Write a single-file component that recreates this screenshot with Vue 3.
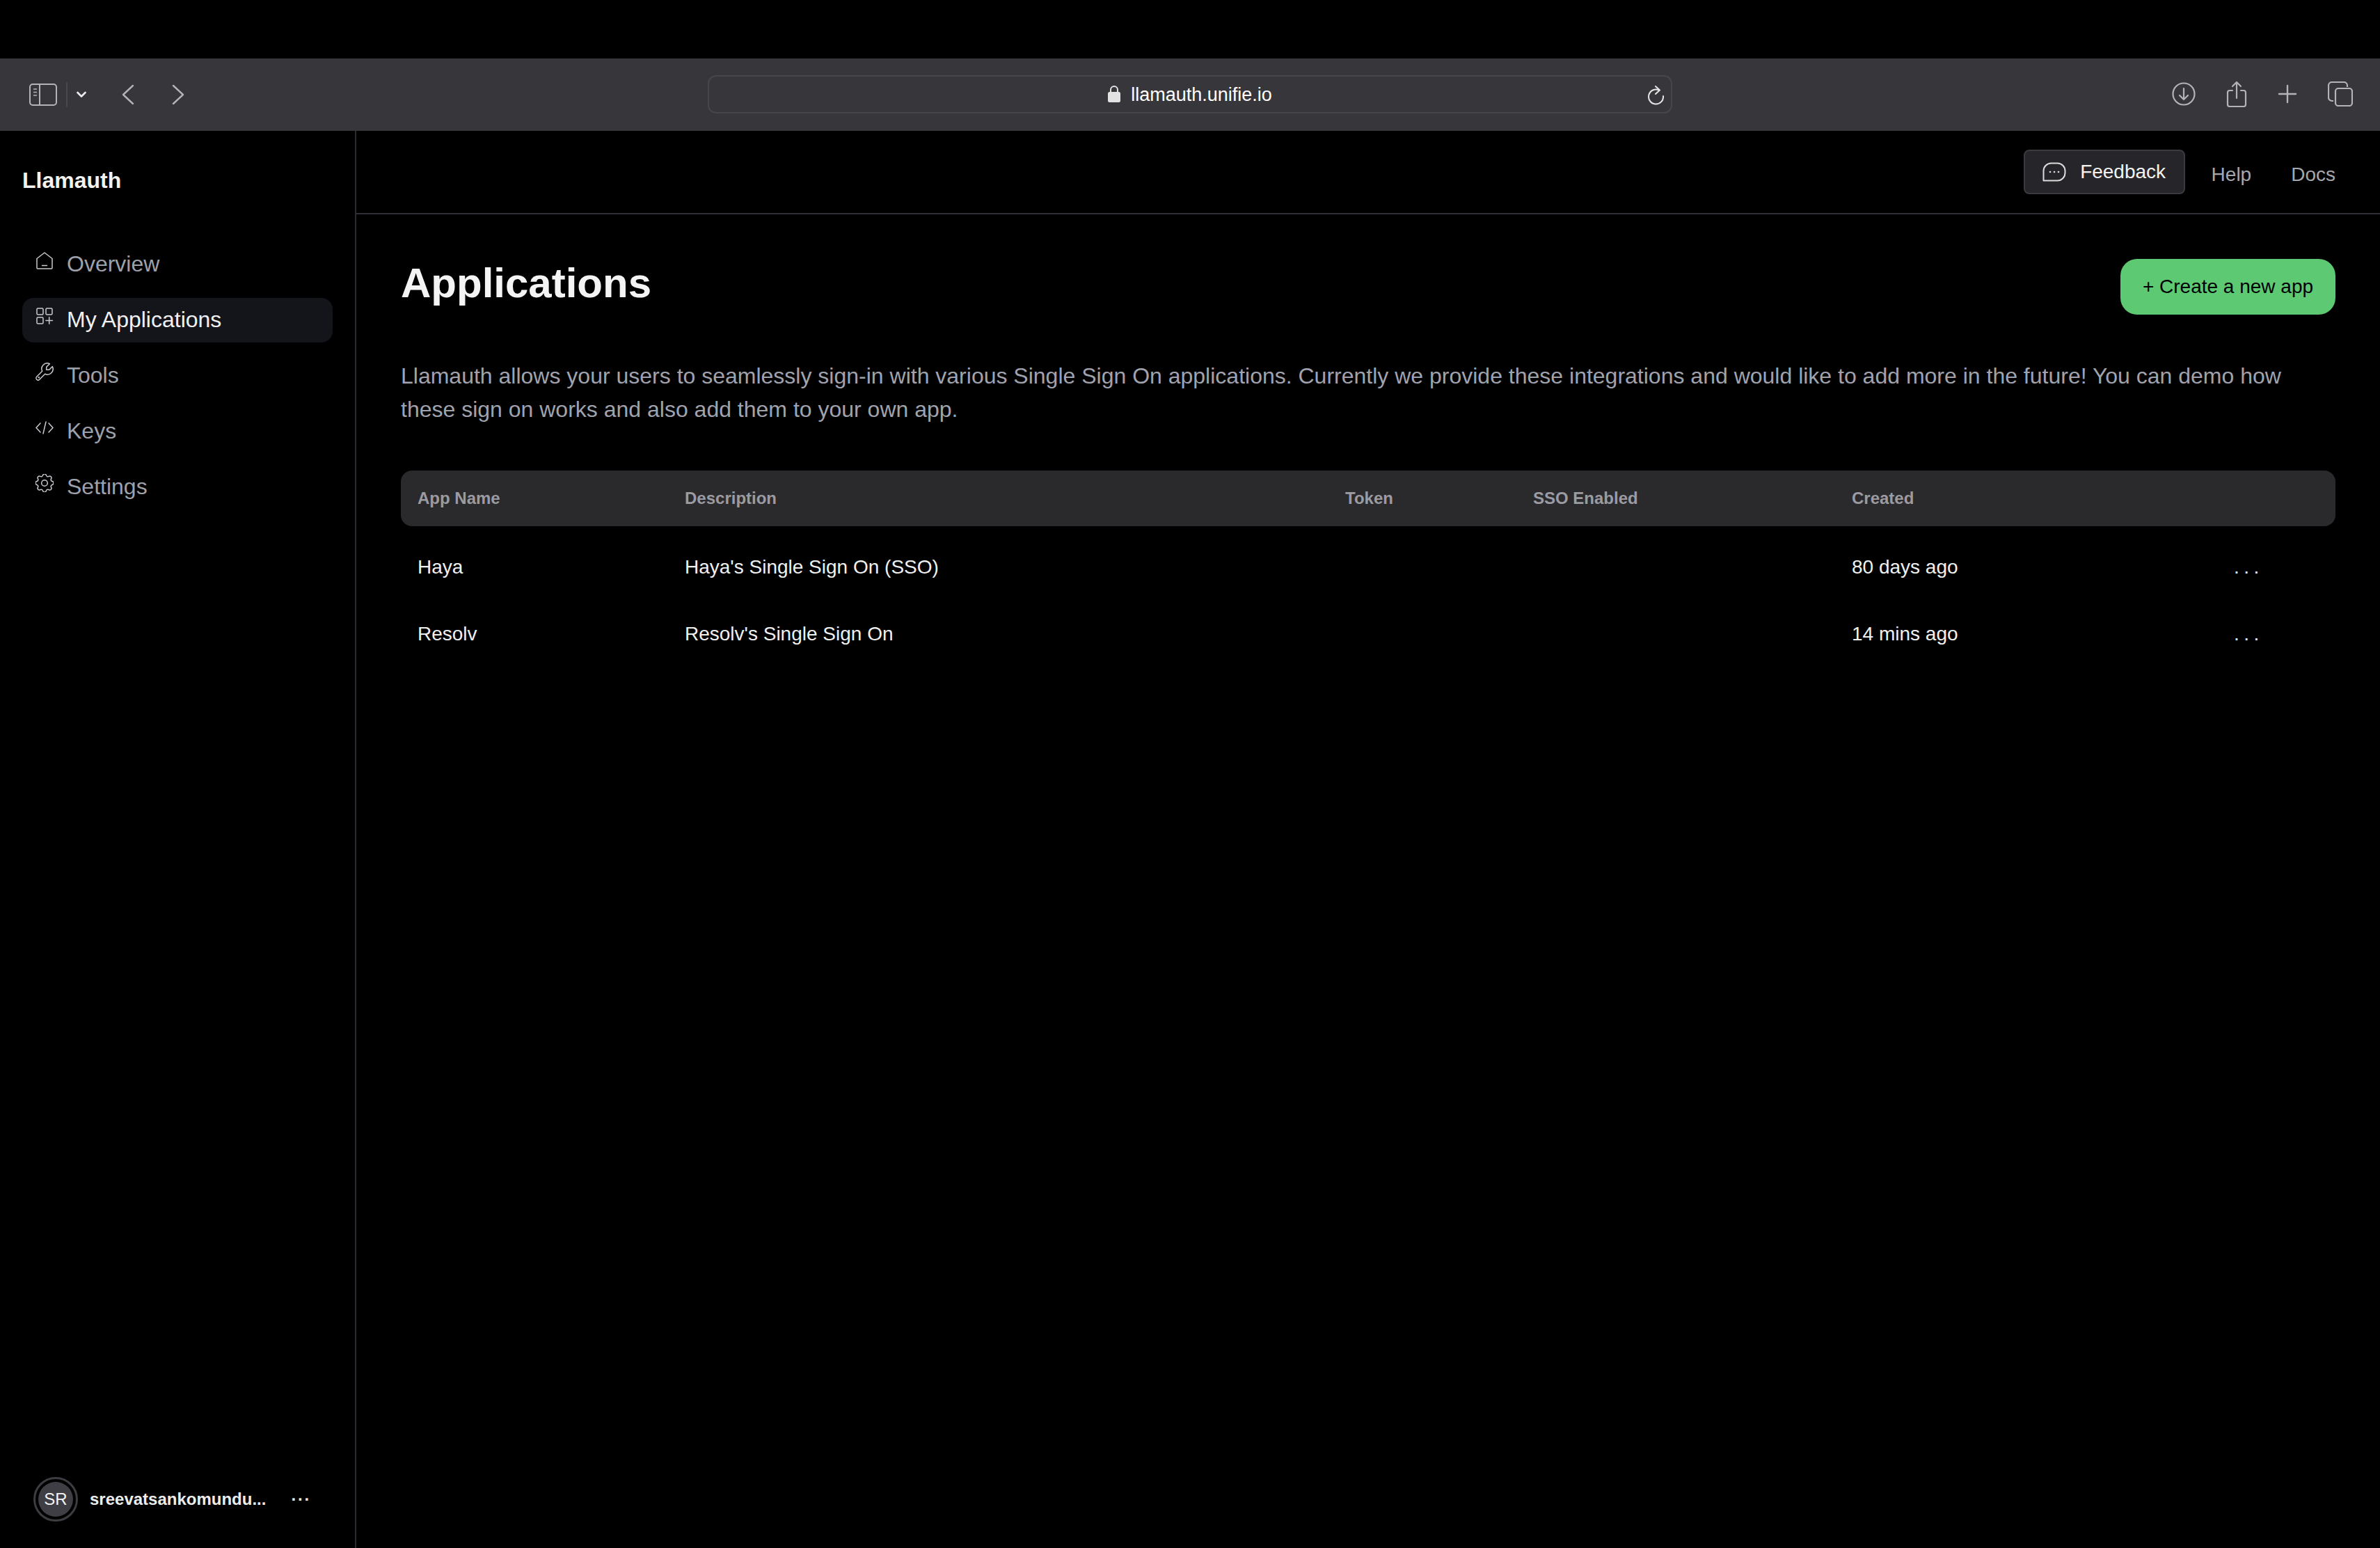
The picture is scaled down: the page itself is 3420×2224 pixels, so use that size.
<script setup>
const navItems = [
  { label: "Overview", icon: "home" },
  { label: "My Applications", icon: "apps", active: true },
  { label: "Tools", icon: "tool" },
  { label: "Keys", icon: "code" },
  { label: "Settings", icon: "gear" },
];

const apps = [
  { name: "Haya", description: "Haya's Single Sign On (SSO)", created: "80 days ago" },
  { name: "Resolv", description: "Resolv's Single Sign On", created: "14 mins ago" },
];
</script>

<template>
  <div class="page">
    <div class="notch"></div>

    <div class="toolbar">
      <div class="toolbar__left">
        <svg class="tb-sidebar" width="40" height="32" viewBox="0 0 40 32" fill="none" stroke="#b4b3b7" stroke-width="2">
          <rect x="1" y="1" width="38" height="30" rx="4" />
          <path d="M15 1v30" />
          <path d="M6 8h5M6 12.500h5M6 17h5" stroke-width="1.500" />
        </svg>
        <span class="tb-divider"></span>
        <svg class="tb-caret" width="14" height="10" viewBox="0 0 14 10" fill="none" stroke="#ececec" stroke-width="2.600" stroke-linecap="round" stroke-linejoin="round">
          <path d="M1.500 2l5.500 5.500L12.500 2" />
        </svg>
        <svg class="tb-back" width="18" height="30" viewBox="0 0 18 30" fill="none" stroke="#b4b3b7" stroke-width="2.400" stroke-linecap="round" stroke-linejoin="round">
          <path d="M16 2L2 15l14 13" />
        </svg>
        <svg class="tb-forward" width="18" height="30" viewBox="0 0 18 30" fill="none" stroke="#b4b3b7" stroke-width="2.400" stroke-linecap="round" stroke-linejoin="round">
          <path d="M2 2l14 13L2 28" />
        </svg>
      </div>

      <div class="urlbar">
        <svg class="urlbar__lock" width="18" height="24" viewBox="0 0 18 24">
          <path d="M4 10V6a5 5 0 0 1 10 0v4" fill="none" stroke="#e2e2e2" stroke-width="2" />
          <rect x="0" y="9" width="18" height="15" rx="2.500" fill="#e2e2e2" />
        </svg>
        <span class="urlbar__text">llamauth.unifie.io</span>
        <svg class="urlbar__reload" width="24" height="28" viewBox="0 0 24 28" fill="none" stroke="#e6e6e6" stroke-width="2" stroke-linecap="round" stroke-linejoin="round">
          <path d="M16 6.500A10.500 10.500 0 1 0 22 15" />
          <path d="M11 1l6 5.500L11 12" />
        </svg>
      </div>

      <div class="toolbar__right">
        <svg width="34" height="34" viewBox="0 0 34 34" fill="none" stroke="#b4b3b7" stroke-width="2.200" stroke-linecap="round" stroke-linejoin="round">
          <circle cx="17" cy="17" r="15.500" />
          <path d="M17 9v16M11 19l6 6 6-6" />
        </svg>
        <svg width="30" height="38" viewBox="0 0 30 38" fill="none" stroke="#b4b3b7" stroke-width="2.200" stroke-linecap="round" stroke-linejoin="round">
          <path d="M9 14H5a3 3 0 0 0-3 3v17a3 3 0 0 0 3 3h20a3 3 0 0 0 3-3V17a3 3 0 0 0-3-3h-4" />
          <path d="M15 25V2M9 8l6-6 6 6" />
        </svg>
        <svg width="28" height="28" viewBox="0 0 28 28" fill="none" stroke="#b4b3b7" stroke-width="2.400" stroke-linecap="round">
          <path d="M14 2v24M2 14h24" />
        </svg>
        <svg width="36" height="36" viewBox="0 0 36 36" fill="none" stroke="#b4b3b7" stroke-width="2.200" stroke-linejoin="round">
          <path d="M8 28H6a5 5 0 0 1-5-5V6a5 5 0 0 1 5-5h17a5 5 0 0 1 5 5v2" />
          <rect x="11" y="10" width="24" height="25" rx="4" />
        </svg>
      </div>
    </div>

    <div class="shell">
      <aside class="sidebar">
        <div class="brand">Llamauth</div>

        <nav class="nav">
          <a
            v-for="item in navItems"
            :key="item.label"
            class="nav__item"
            :class="{ 'nav__item--active': item.active }"
          >
            <svg class="nav__icon" width="26" height="26" viewBox="0 0 26 26" fill="none" stroke="currentColor" stroke-width="1.500" stroke-linecap="round" stroke-linejoin="round">
              <template v-if="item.icon === 'home'">
                <path d="M2 10.500L13 2l11 8.500V24a1 1 0 0 1-1 1H3a1 1 0 0 1-1-1z" />
                <path d="M9.500 20.500h7" />
              </template>
              <template v-else-if="item.icon === 'apps'">
                <rect x="2" y="2" width="9" height="9" rx="1.500" />
                <rect x="15" y="2" width="9" height="9" rx="1.500" />
                <rect x="2" y="15" width="9" height="9" rx="1.500" />
                <path d="M15 19.500h9.500M19.700 14.700v9.600" />
              </template>
              <template v-else-if="item.icon === 'tool'">
                <g transform="translate(25 1) scale(-1.330 1.330) translate(-3 -3)" stroke-width="1.130">
                  <path d="M7 10h3v-3l-3.500-3.500a6 6 0 0 1 8 8l6 6a2 2 0 0 1-3 3l-6-6a6 6 0 0 1-8-8l3.500 3.500" />
                  <circle cx="18.200" cy="18.200" r=".400" />
                </g>
              </template>
              <template v-else-if="item.icon === 'code'">
                <path d="M7 7l-6 6.500L7 20M19 7l6 6.500L19 20M15 5l-4 17" />
              </template>
              <template v-else>
                <g transform="translate(-4.330 -4.330) scale(1.444)" stroke-width="1.050">
                  <path d="M10.325 4.317c.426-1.756 2.924-1.756 3.35 0a1.724 1.724 0 0 0 2.573 1.066c1.543-.94 3.31.826 2.37 2.37a1.724 1.724 0 0 0 1.065 2.572c1.756.426 1.756 2.924 0 3.35a1.724 1.724 0 0 0-1.066 2.573c.94 1.543-.826 3.31-2.37 2.37a1.724 1.724 0 0 0-2.572 1.065c-.426 1.756-2.924 1.756-3.35 0a1.724 1.724 0 0 0-2.573-1.066c-1.543.94-3.31-.826-2.37-2.37a1.724 1.724 0 0 0-1.065-2.572c-1.756-.426-1.756-2.924 0-3.35a1.724 1.724 0 0 0 1.066-2.573c-.94-1.543.826-3.31 2.37-2.37c1 .608 2.296.07 2.572-1.065z" />
                  <circle cx="12" cy="12" r="3" />
                </g>
              </template>
            </svg>
            <span>{{ item.label }}</span>
          </a>
        </nav>

        <div class="user">
          <div class="user__ring">
            <div class="user__avatar">SR</div>
          </div>
          <span class="user__name">sreevatsankomundu...</span>
          <span class="user__more">···</span>
        </div>
      </aside>

      <main class="main">
        <header class="topbar">
          <button class="feedback">
            <svg width="34" height="28" viewBox="0 0 34 28" fill="none" stroke="#dcdcdc" stroke-width="2">
              <path d="M1.500 26.500V12.500a11 11 0 0 1 11-11h9a11 11 0 0 1 11 11v3a11 11 0 0 1-11 11z" stroke-linejoin="round" />
              <circle cx="11" cy="14" r="1.300" fill="#dcdcdc" stroke="none" />
              <circle cx="17" cy="14" r="1.300" fill="#dcdcdc" stroke="none" />
              <circle cx="23" cy="14" r="1.300" fill="#dcdcdc" stroke="none" />
            </svg>
            Feedback
          </button>
          <a class="topbar__link">Help</a>
          <a class="topbar__link">Docs</a>
        </header>

        <section class="content">
          <div class="content__head">
            <h1>Applications</h1>
            <button class="create">+ Create a new app</button>
          </div>

          <p class="intro">
            Llamauth allows your users to seamlessly sign-in with various Single Sign On applications. Currently we provide these integrations and would like to add more in the future! You can demo how these sign on works and also add them to your own app.
          </p>

          <div class="table">
            <div class="table__row table__row--head">
              <span>App Name</span>
              <span>Description</span>
              <span>Token</span>
              <span>SSO Enabled</span>
              <span>Created</span>
              <span></span>
            </div>
            <div v-for="app in apps" :key="app.name" class="table__row">
              <span>{{ app.name }}</span>
              <span>{{ app.description }}</span>
              <span></span>
              <span></span>
              <span>{{ app.created }}</span>
              <span class="table__more">...</span>
            </div>
          </div>
        </section>
      </main>
    </div>
  </div>
</template>

<style>
html,
body {
  background: #000;
}
</style>

<style scoped>
.page {
  display: flex;
  flex-direction: column;
  height: 100vh;
  min-height: 2224px;
  background: #000;
  color: #fff;
  font-family: "Liberation Sans", Arial, sans-serif;
}

.notch {
  height: 84px;
  flex: none;
}

/* browser chrome */
.toolbar {
  flex: none;
  height: 104px;
  background: #37363b;
  display: grid;
  grid-template-columns: 1017px 1386px 1fr;
  align-items: center;
}
.toolbar__left {
  display: flex;
  align-items: center;
  padding-left: 42px;
  margin-top: -1px;
}
.tb-divider {
  width: 2px;
  height: 36px;
  background: #49484e;
  margin-left: 13px;
}
.tb-caret {
  margin-left: 13px;
}
.tb-back {
  margin-left: 51px;
}
.tb-forward {
  margin-left: 54px;
}
.toolbar__right {
  display: flex;
  align-items: center;
  justify-content: flex-end;
  padding-right: 39px;
  gap: 44px;
  margin-top: -2px;
}

.urlbar {
  height: 55px;
  margin-top: -2px;
  box-sizing: border-box;
  border: 2px solid #47464c;
  border-radius: 12px;
  display: flex;
  align-items: center;
  justify-content: center;
  gap: 15px;
  position: relative;
}
.urlbar__text {
  font-size: 27px;
  color: #fff;
  padding-top: 3px;
}
.urlbar__reload {
  position: absolute;
  right: 9px;
  top: 13px;
}

.shell {
  flex: 1;
  display: flex;
  min-height: 0;
}

/* sidebar */
.sidebar {
  width: 512px;
  flex: none;
  box-sizing: border-box;
  border-right: 2px solid #2a2c32;
  padding: 53px 32px 38px;
  display: flex;
  flex-direction: column;
}
.brand {
  font-size: 32px;
  font-weight: 700;
  line-height: 36px;
  color: #f2f2f2;
}
.nav {
  display: flex;
  flex-direction: column;
  gap: 16px;
  margin-top: 71px;
}
.nav__item {
  height: 64px;
  display: flex;
  align-items: center;
  gap: 19px;
  padding-left: 19px;
  border-radius: 16px;
  font-size: 32px;
  color: #9ea1aa;
}
.nav__item span {
  margin-top: -2px;
}
.nav__icon {
  flex: none;
  color: #c8cad0;
  margin-bottom: 12px;
}
.nav__item--active {
  background: #14151a;
  color: #f0f0f2;
}
.user {
  margin-top: auto;
  display: flex;
  align-items: center;
  padding-left: 16px;
}
.user__ring {
  width: 64px;
  height: 64px;
  box-sizing: border-box;
  border: 3px solid #3c3c42;
  border-radius: 50%;
  padding: 4px;
  flex: none;
}
.user__avatar {
  width: 100%;
  height: 100%;
  border-radius: 50%;
  background: #3e3e44;
  display: flex;
  align-items: center;
  justify-content: center;
  font-size: 24px;
  color: #f2f2f2;
}
.user__name {
  margin-left: 17px;
  font-size: 24px;
  font-weight: 700;
  color: #ececec;
  white-space: nowrap;
}
.user__more {
  margin-left: 36px;
  font-size: 24px;
  font-weight: 700;
  letter-spacing: 1.500px;
  color: #e8e8e8;
}

/* main column */
.main {
  flex: 1;
  min-width: 0;
}
.topbar {
  height: 120px;
  box-sizing: border-box;
  border-bottom: 2px solid #2e3036;
  display: flex;
  align-items: center;
  justify-content: flex-end;
  padding-right: 64px;
  gap: 57px;
}
.feedback {
  height: 64px;
  width: 232px;
  box-sizing: border-box;
  margin-right: -19px;
  border: 2px solid #3a3a40;
  border-radius: 8px;
  background: #26262a;
  display: flex;
  align-items: center;
  justify-content: center;
  gap: 20px;
  font: inherit;
  font-size: 28px;
  color: #f2f2f2;
  padding: 0;
}
.topbar__link {
  font-size: 28px;
  color: #a5a7af;
  padding-top: 8px;
}

.content {
  padding: 64px 64px 0;
}
.content__head {
  display: flex;
  align-items: center;
  justify-content: space-between;
}
h1 {
  margin: -10px 0 0;
  font-size: 60px;
  line-height: 72px;
  font-weight: 700;
  color: #f4f4f4;
}
.create {
  width: 309px;
  height: 80px;
  border: 0;
  border-radius: 24px;
  background: #5ec973;
  color: #000;
  font: inherit;
  font-size: 28px;
  padding: 0;
}
.intro {
  margin: 64px 0 0;
  font-size: 32px;
  line-height: 48px;
  color: #a0a3ad;
}

.table {
  margin-top: 64px;
}
.table__row {
  display: grid;
  grid-template-columns: 384px 949px 270px 458px 549px 1fr;
  align-items: center;
  height: 96px;
  font-size: 28px;
  color: #f0f0f0;
}
.table__row > span {
  padding-left: 24px;
}
.table__row--head {
  height: 80px;
  margin-bottom: 11px;
  border-radius: 16px;
  background: #2a2a2d;
  font-size: 24px;
  font-weight: 700;
  color: #9b9ba1;
}
.table__more {
  letter-spacing: 6.500px;
}
</style>
